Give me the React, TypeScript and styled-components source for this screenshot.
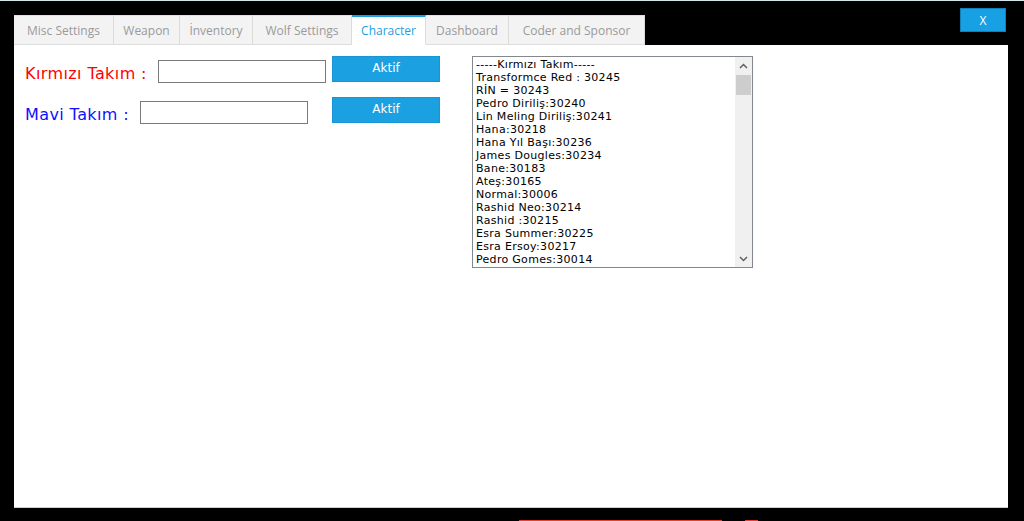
import React from "react";
import styled, { createGlobalStyle } from "styled-components";

const Global = createGlobalStyle`
  html, body { margin: 0; padding: 0; background: #000; }
  #root { width: 1024px; height: 521px; overflow: hidden; }
`;

const Page = styled.div`
  position: relative;
  width: 1024px;
  height: 521px;
  background: #000;
  display: flex;
  flex-direction: column;
  border-top: 1px solid #d6e6ef;
  box-sizing: border-box;
`;

const TitleSpace = styled.div`
  height: 14px;
  flex: none;
`;

const CloseButton = styled.button`
  position: absolute;
  left: 960px;
  top: 7px;
  width: 46px;
  height: 24px;
  background: #17a0e3;
  border: 1px solid #0f7fb8;
  color: #fff;
  font-family: "Open Sans", "DejaVu Sans", sans-serif;
  font-size: 12px;
  padding: 0;
  cursor: pointer;
`;

const Window = styled.div`
  margin-left: 14px;
  width: 994px;
  height: 493px;
  display: flex;
  flex-direction: column;
  flex: none;
`;

const TabStrip = styled.div`
  display: flex;
  height: 30px;
  flex: none;
`;

const Tab = styled.div<{ $active?: boolean; $w: number }>`
  width: ${(p) => p.$w}px;
  box-sizing: border-box;
  height: 30px;
  display: flex;
  align-items: center;
  justify-content: center;
  font-family: "Open Sans", "DejaVu Sans", sans-serif;
  font-size: 12px;
  background: ${(p) => (p.$active ? "#fff" : "#f3f3f3")};
  color: ${(p) => (p.$active ? "#1ba1e2" : "#9a9a9a")};
  border-top: ${(p) => (p.$active ? "2px solid #1ba1e2" : "1px solid #e2e2e2")};
  border-right: 1px solid #dcdcdc;
  border-bottom: ${(p) => (p.$active ? "1px solid #fff" : "1px solid #dcdcdc")};
`;

const Content = styled.div`
  flex: 1;
  background: #fff;
  border-bottom: 1px solid #d0d0d0;
  display: flex;
  gap: 32px;
  padding: 11px 0 0 11px;
`;

const Form = styled.div`
  display: flex;
  flex-direction: column;
  gap: 14px;
`;

const Row = styled.div`
  display: flex;
  align-items: flex-start;
`;

const FieldGroup = styled.div`
  width: 307px;
  display: flex;
  align-items: center;
  gap: 11px;
`;

const Label = styled.span<{ $color: string; $offset: number }>`
  color: ${(p) => p.$color};
  font-family: "DejaVu Sans", sans-serif;
  font-size: 16px;
  letter-spacing: 0.4px;
  white-space: nowrap;
  margin-top: ${(p) => p.$offset}px;
`;

const TextInput = styled.input<{ $top: number }>`
  width: 168px;
  height: 23px;
  box-sizing: border-box;
  border: 1px solid #7a7a7a;
  margin-top: ${(p) => p.$top}px;
  padding: 0 3px;
  outline: none;
`;

const ActionButton = styled.button`
  width: 108px;
  height: 26px;
  box-sizing: border-box;
  background: #1ba1e2;
  border: 1px solid #1a95d3;
  color: #fff;
  font-family: "DejaVu Sans", sans-serif;
  font-size: 12px;
  padding: 0 0 3px;
`;

const ListBox = styled.div`
  width: 281px;
  height: 212px;
  box-sizing: border-box;
  border: 1px solid #828790;
  display: flex;
`;

const ListItems = styled.div`
  flex: 1;
  overflow: hidden;
  padding: 1px 0 0 3px;
  font-family: "DejaVu Sans", sans-serif;
  font-size: 11px;
  letter-spacing: 0.3px;
  line-height: 13px;
  color: #000;
`;

const ListItem = styled.div`
  white-space: nowrap;
`;

const ScrollBar = styled.div`
  width: 17px;
  background: #f0f0f0;
  display: flex;
  flex-direction: column;
`;

const Arrow = styled.div`
  height: 17px;
  display: flex;
  align-items: center;
  justify-content: center;
`;

const Track = styled.div`
  flex: 1;
  display: flex;
  flex-direction: column;
`;

const Thumb = styled.div`
  height: 20px;
  margin: 1px 1px 0;
  background: #cdcdcd;
`;

const BottomSpace = styled.div`
  flex: 1;
  display: flex;
  align-items: flex-end;
`;

const RedLine = styled.div<{ $left: number; $w: number }>`
  height: 1px;
  width: ${(p) => p.$w}px;
  margin-left: ${(p) => p.$left}px;
  background: #e8402a;
`;

const tabs = [
  { t: "Misc Settings", w: 100 },
  { t: "Weapon", w: 66 },
  { t: "İnventory", w: 73 },
  { t: "Wolf Settings", w: 99 },
  { t: "Character", w: 74, active: true },
  { t: "Dashboard", w: 83 },
  { t: "Coder and Sponsor", w: 136 },
];

const items = [
  "-----Kırmızı Takım-----",
  "Transformce Red : 30245",
  "RİN = 30243",
  "Pedro Diriliş:30240",
  "Lin Meling Diriliş:30241",
  "Hana:30218",
  "Hana Yıl Başı:30236",
  "James Dougles:30234",
  "Bane:30183",
  "Ateş:30165",
  "Normal:30006",
  "Rashid Neo:30214",
  "Rashid :30215",
  "Esra Summer:30225",
  "Esra Ersoy:30217",
  "Pedro Gomes:30014",
];

const Chevron = ({ up }: { up?: boolean }) => (
  <svg width="9" height="6" viewBox="0 0 9 6">
    <path
      d={up ? "M1 5 L4.5 1.5 L8 5" : "M1 1 L4.5 4.5 L8 1"}
      fill="none"
      stroke="#606060"
      strokeWidth="1.5"
    />
  </svg>
);

export default function App() {
  return (
    <>
      <Global />
      <Page>
        <TitleSpace />
        <CloseButton>X</CloseButton>
        <Window>
          <TabStrip>
            {tabs.map((t) => (
              <Tab key={t.t} $w={t.w} $active={t.active}>
                {t.t}
              </Tab>
            ))}
          </TabStrip>
          <Content>
            <Form>
              <Row>
                <FieldGroup>
                  <Label $color="#ff0000" $offset={8}>Kırmızı Takım :</Label>
                  <TextInput $top={3} />
                </FieldGroup>
                <ActionButton>Aktif</ActionButton>
              </Row>
              <Row>
                <FieldGroup>
                  <Label $color="#1010ff" $offset={8}>Mavi Takım :</Label>
                  <TextInput $top={3} />
                </FieldGroup>
                <ActionButton>Aktif</ActionButton>
              </Row>
            </Form>
            <ListBox>
              <ListItems>
                {items.map((i) => (
                  <ListItem key={i}>{i}</ListItem>
                ))}
              </ListItems>
              <ScrollBar>
                <Arrow>
                  <Chevron up />
                </Arrow>
                <Track>
                  <Thumb />
                </Track>
                <Arrow>
                  <Chevron />
                </Arrow>
              </ScrollBar>
            </ListBox>
          </Content>
        </Window>
        <BottomSpace>
          <RedLine $left={519} $w={203} />
          <RedLine $left={23} $w={13} />
        </BottomSpace>
      </Page>
    </>
  );
}
